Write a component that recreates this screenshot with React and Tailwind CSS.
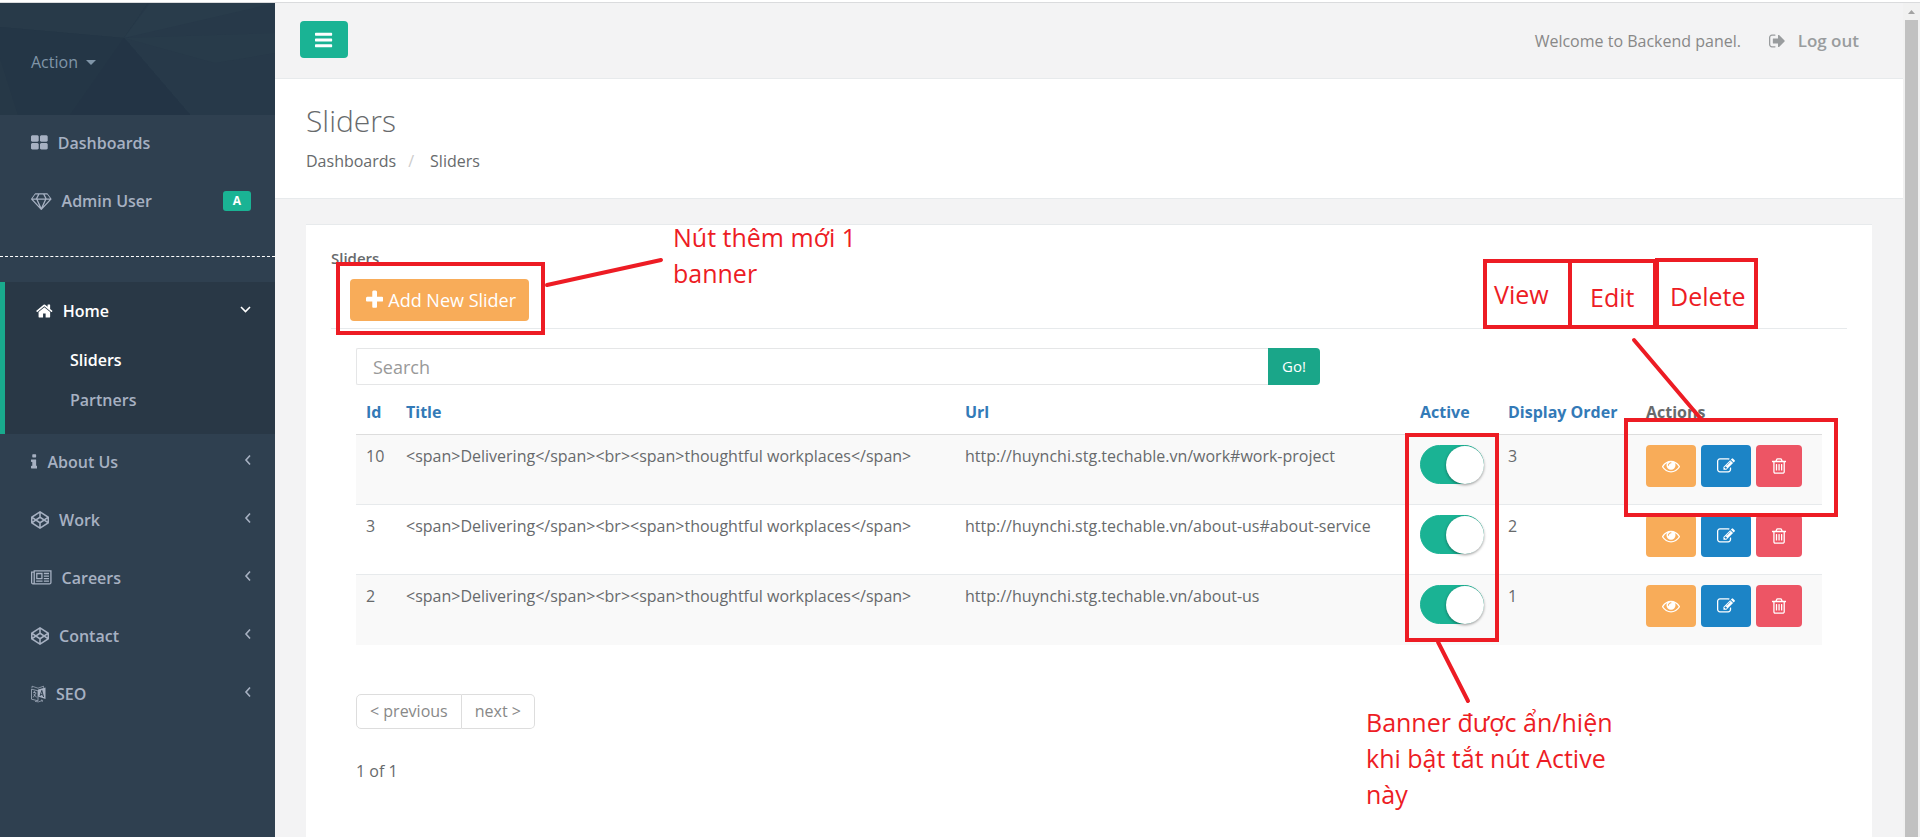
import { useState } from "react";

const DOUBLE_WIDE = "0 0 2048 1792";

const ICONS = {
  thLarge: {
    box: "64 0 1664 1792",
    d: "M832 1024v384q0 52-38 90t-90 38h-512q-52 0-90-38t-38-90v-384q0-52 38-90t90-38h512q52 0 90 38t38 90zm0-768v384q0 52-38 90t-90 38h-512q-52 0-90-38t-38-90v-384q0-52 38-90t90-38h512q52 0 90 38t38 90zm896 768v384q0 52-38 90t-90 38h-512q-52 0-90-38t-38-90v-384q0-52 38-90t90-38h512q52 0 90 38t38 90zm0-768v384q0 52-38 90t-90 38h-512q-52 0-90-38t-38-90v-384q0-52 38-90t90-38h512q52 0 90 38t38 90z",
  },
  diamond: {
    box: DOUBLE_WIDE,
    d: "M212 768l623 665-300-665h-323zm812 772l349-772h-698zm-538-900l204-384h-262l-288 384h346zm727 793l623-665h-323zm-583-793h788l-204-384h-380zm932 0h346l-288-384h-262zm89-486l384 512q14 18 13 41.5t-17 40.5l-960 1024q-18 20-47 20t-47-20l-960-1024q-16-17-17-40.5t13-41.5l384-512q18-26 51-26h1152q33 0 51 26z",
  },
  home: {
    box: "64 0 1664 1792",
    d: "M1472 992v480q0 26-19 45t-45 19h-384v-384h-256v384h-384q-26 0-45-19t-19-45v-480q0-1 .5-3t.5-3l575-474 575 474q1 2 1 6zm223-69l-62 74q-8 9-21 11h-3q-13 0-21-7l-692-577-692 577q-12 8-24 7-13-2-21-11l-62-74q-8-10-7-23.5t11-21.5l719-599q32-26 76-26t76 26l244 204v-195q0-14 9-23t23-9h192q14 0 23 9t9 23v408l219 182q10 8 11 21.5t-7 23.5z",
  },
  info: {
    box: "576 0 640 1792",
    d: "M1216 1344v128q0 26-19 45t-45 19h-512q-26 0-45-19t-19-45v-128q0-26 19-45t45-19h64v-384h-64q-26 0-45-19t-19-45v-128q0-26 19-45t45-19h384q26 0 45 19t19 45v576h64q26 0 45 19t19 45zm-128-1152v192q0 26-19 45t-45 19h-256q-26 0-45-19t-19-45v-192q0-26 19-45t45-19h256q26 0 45 19t19 45z",
  },
  codepen: {
    box: "0 0 1792 1792",
    d: "M216 1169l603 402v-359l-334-223zm-62-144l193-129-193-129v258zm819 546l603-402-269-180-334 223v359zm-77-493l272-182-272-182-272 182zm-411-275l334-223v-359l-603 402zm960 93l193 129v-258zm-138-93l269-180-603-402v359zm485-180v546q0 41-34 64l-819 546q-21 13-43 13t-43-13l-819-546q-34-23-34-64v-546q0-41 34-64l819-546q21-13 43-13t43 13l819 546q34 23 34 64z",
  },
  newspaper: {
    box: DOUBLE_WIDE,
    d: "M1024 512h-384v384h384v-384zm128 640v128h-640v-128h640zm0-768v640h-640v-640h640zm640 768v128h-512v-128h512zm0-256v128h-512v-128h512zm0-256v128h-512v-128h512zm0-256v128h-512v-128h512zm-1536 960v-960h-128v960q0 26 19 45t45 19 45-19 19-45zm1664 0v-1088h-1536v1088q0 33-11 64h1483q26 0 45-19t19-45zm128-1216v1216q0 80-56 136t-136 56h-1664q-80 0-136-56t-56-136v-1088h256v-128h1792z",
  },
  signOut: {
    box: "64 0 1664 1792",
    d: "M704 1440q0 4 1 20t.5 26.5-3 23.5-10 19.5-20.5 6.5h-320q-119 0-203.5-84.5t-84.5-203.5v-704q0-119 84.5-203.5t203.5-84.5h320q13 0 22.5 9.5t9.5 22.5q0 4 1 20t.5 26.5-3 23.5-10 19.5-20.5 6.5h-320q-66 0-113 47t-47 113v704q0 66 47 113t113 47h312l11.5 1 11.5 3 8 5.5 7 9 2 13.5zm928-544q0 26-19 45l-544 544q-19 19-45 19t-45-19-19-45v-288h-448q-26 0-45-19t-19-45v-384q0-26 19-45t45-19h448v-288q0-26 19-45t45-19 45 19l544 544q19 19 19 45z",
  },
  bars: {
    box: "128 0 1536 1792",
    d: "M1664 1344v128q0 26-19 45t-45 19h-1408q-26 0-45-19t-19-45v-128q0-26 19-45t45-19h1408q26 0 45 19t19 45zm0-512v128q0 26-19 45t-45 19h-1408q-26 0-45-19t-19-45v-128q0-26 19-45t45-19h1408q26 0 45 19t19 45zm0-512v128q0 26-19 45t-45 19h-1408q-26 0-45-19t-19-45v-128q0-26 19-45t45-19h1408q26 0 45 19t19 45z",
  },
  plus: {
    box: "192 0 1408 1792",
    d: "M1600 736v192q0 40-28 68t-68 28h-416v416q0 40-28 68t-68 28h-192q-40 0-68-28t-28-68v-416h-416q-40 0-68-28t-28-68v-192q0-40 28-68t68-28h416v-416q0-40 28-68t68-28h192q40 0 68 28t28 68v416h416q40 0 68 28t28 68z",
  },
  eye: {
    box: "0 0 1792 1792",
    d: "M1664 960q-152-236-381-353 61 104 61 225 0 185-131.5 316.5t-316.5 131.5-316.5-131.5-131.5-316.5q0-121 61-225-229 117-381 353 133 205 333.5 326.5t434.5 121.5 434.5-121.5 333.5-326.5zm-720-384q0-20-14-34t-34-14q-125 0-214.5 89.5t-89.5 214.5q0 20 14 34t34 14 34-14 14-34q0-86 61-147t147-61q20 0 34-14t14-34zm848 384q0 34-20 69-140 230-376.5 368.5t-499.5 138.5-499.5-139-376.5-368q-20-35-20-69t20-69q140-229 376.5-368t499.5-139 499.5 139 376.5 368q20 35 20 69z",
  },
  edit: {
    box: "0 0 1792 1792",
    d: "M888 1184l116-116-152-152-116 116v56h96v96h56zm440-720q-16-16-33 1l-350 350q-17 17-1 33t33-1l350-350q17-17 1-33zm80 594v190q0 119-84.5 203.5t-203.5 84.5h-832q-119 0-203.5-84.5t-84.5-203.5v-832q0-119 84.5-203.5t203.5-84.5h832q63 0 117 25 15 7 18 23 3 17-9 29l-49 49q-14 14-32 8-23-6-45-6h-832q-66 0-113 47t-47 113v832q0 66 47 113t113 47h832q66 0 113-47t47-113v-126q0-13 9-22l64-64q15-15 35-7t20 29zm-96-738l288 288-672 672h-288v-288zm444 132l-92 92-288-288 92-92q28-28 68-28t68 28l152 152q28 28 28 68t-28 68z",
  },
  trash: {
    box: "192 0 1408 1792",
    d: "M704 736v576q0 14-9 23t-23 9h-64q-14 0-23-9t-9-23v-576q0-14 9-23t23-9h64q14 0 23 9t9 23zm256 0v576q0 14-9 23t-23 9h-64q-14 0-23-9t-9-23v-576q0-14 9-23t23-9h64q14 0 23 9t9 23zm256 0v576q0 14-9 23t-23 9h-64q-14 0-23-9t-9-23v-576q0-14 9-23t23-9h64q14 0 23 9t9 23zm128 724v-948h-896v948q0 22 7 40.5t14.5 27 10.5 8.5h832q3 0 10.5-8.5t14.5-27 7-40.5zm-672-1076h448l-48-117q-7-9-17-11h-317q-10 2-17 11zm928 32v64q0 14-9 23t-23 9h-96v948q0 83-47 143.5t-113 60.5h-832q-66 0-113-58.5t-47-141.5v-952h-96q-14 0-23-9t-9-23v-64q0-14 9-23t23-9h309l70-167q15-37 54-63t79-26h320q40 0 79 26t54 63l70 167h309q14 0 23 9t9 23z",
  },
};

function Icon({ name }) {
  const { box, d } = ICONS[name];
  return (
    <svg viewBox={box} className="h-[18px] w-auto shrink-0 fill-current" aria-hidden="true">
      <path d={d} />
    </svg>
  );
}

function LanguageIcon() {
  return (
    <svg viewBox="0 0 15 18" className="h-[18px] w-auto shrink-0" aria-hidden="true">
      <path d="M7 4.5 14.5 2.6V14L7 11.6z" fill="currentColor" />
      <path d="M.5 4.2 7 5.8v10L.5 14.2z" fill="none" stroke="currentColor" strokeWidth=".8" />
      <path d="M1 3.2V1.2l6 2 5.5-2v1.6" fill="none" stroke="currentColor" strokeWidth=".7" />
      <path d="M2 7.2l3.4.8M3.6 6v1.8M4.8 8.2 2.2 12.4M2.6 8.8l3 3.6" fill="none" stroke="currentColor" strokeWidth=".8" />
      <path d="M9 11l1.8-5.6L12.6 12M9.6 9.4l2.4.6" fill="none" stroke="#2f4050" strokeWidth="1" />
      <path d="M4 16.4q3.500 1.400 7-.8M10 15l1.600.3-.4 1.600" fill="none" stroke="currentColor" strokeWidth=".7" />
    </svg>
  );
}

function Angle({ open }) {
  return (
    <svg viewBox="0 0 12 12" className="mb-1 ml-auto h-3 w-3 shrink-0" fill="none" stroke="currentColor" strokeWidth="1.600" aria-hidden="true">
      {open ? <path d="M2 4 6.500 8.500 11 4" /> : <path d="M11 1.500 7 6l4 4.500" />}
    </svg>
  );
}

const LOWER_MENU = [
  { label: "About Us", icon: <Icon name="info" /> },
  { label: "Work", icon: <Icon name="codepen" /> },
  { label: "Careers", icon: <Icon name="newspaper" /> },
  { label: "Contact", icon: <Icon name="codepen" /> },
  { label: "SEO", icon: <LanguageIcon /> },
];

const TITLE = "<span>Delivering</span><br><span>thoughtful workplaces</span>";

const ROWS = [
  { id: 10, url: "http://huynchi.stg.techable.vn/work#work-project", order: 3 },
  { id: 3, url: "http://huynchi.stg.techable.vn/about-us#about-service", order: 2 },
  { id: 2, url: "http://huynchi.stg.techable.vn/about-us", order: 1 },
];

function MenuLink({ icon, label, children }) {
  return (
    <a href="#" className="flex h-[58px] items-center gap-[10px] pr-6 pl-[31px]">
      {icon}
      <span>{label}</span>
      {children}
    </a>
  );
}

function Sidebar() {
  return (
    <aside className="w-[275px] shrink-0 bg-[#2f4050] font-semibold text-[#a7b1c2]">
      <div className="relative h-28 overflow-hidden bg-[#263847]">
        <svg viewBox="0 0 275 112" preserveAspectRatio="none" className="absolute inset-0 h-full w-full" aria-hidden="true">
          <path d="M0 0H148L124 35 0 24z" fill="#283a49" />
          <path d="M148 0H275V112H190L124 35z" fill="#273949" />
          <path d="M150 0H275L124 35z" fill="#293c4b" />
          <path d="M124 35 275 30V50L215 60z" fill="#283b4a" />
          <path d="M0 24 124 35 190 112H0z" fill="#243646" />
          <path d="M124 35 70 112H190z" fill="#233445" />
          <path d="M0 55 18 112H0z" fill="#263847" />
        </svg>
        <button type="button" className="relative mt-[47px] ml-[31px] flex items-center gap-2 font-normal text-[#8095a8]">
          Action
          <svg viewBox="0 0 10 5" className="h-[5px] w-[10px] fill-current" aria-hidden="true">
            <path d="M0 0h10L5 5z" />
          </svg>
        </button>
      </div>
      <nav>
        <div className="-mt-px pb-px">
          <MenuLink icon={<Icon name="thLarge" />} label="Dashboards" />
          <MenuLink icon={<Icon name="diamond" />} label="Admin User">
            <span className="ml-auto rounded-[3px] bg-[#1ab394] px-[10px] text-[12px] leading-5 font-bold text-white">A</span>
          </MenuLink>
        </div>
        <hr className="my-[25px] border-t border-dashed border-white" />
        <div className="border-l-[5px] border-[#19aa8d] bg-[#293846] pb-[14px] text-white">
          <MenuLink icon={<Icon name="home" />} label="Home">
            <Angle open />
          </MenuLink>
          <a href="#" className="flex h-10 items-center pl-[65px]">Sliders</a>
          <a href="#" className="flex h-10 items-center pl-[65px] text-[#a7b1c2]">Partners</a>
        </div>
        <div className="-mt-px">
          {LOWER_MENU.map((item) => (
            <MenuLink key={item.label} icon={item.icon} label={item.label}>
              <Angle />
            </MenuLink>
          ))}
        </div>
      </nav>
    </aside>
  );
}

function Switch({ label }) {
  const [on, setOn] = useState(true);
  return (
    <button
      type="button"
      role="switch"
      aria-checked={on}
      aria-label={label}
      onClick={() => setOn(!on)}
      className={
        on
          ? "flex h-[39px] w-16 justify-end rounded-full border border-[#1ab394] bg-[#1ab394]"
          : "flex h-[39px] w-16 justify-start rounded-full border border-[#dfdfdf] bg-white"
      }
    >
      <span className="-mr-px h-[38px] w-[38px] rounded-full bg-white shadow-[0_1px_3px_rgba(0,0,0,0.4)]" />
    </button>
  );
}

function ActionButton({ label, icon, color }) {
  return (
    <button type="button" aria-label={label} className={`flex h-[42px] items-center rounded-[4px] px-4 text-white ${color}`}>
      <Icon name={icon} />
    </button>
  );
}

function SliderTable() {
  return (
    <table className="mt-[6px] w-full table-fixed text-left leading-[22px]">
      <thead>
        <tr className="border-b border-[#dddddd] text-[#337ab7]">
          <th className="w-10 px-[10px] pt-[10px] pb-[11px]"><a href="#">Id</a></th>
          <th className="w-[559px] px-[10px] pt-[10px] pb-[11px]"><a href="#">Title</a></th>
          <th className="px-[10px] pt-[10px] pb-[11px]"><a href="#">Url</a></th>
          <th className="w-[88px] px-[10px] pt-[10px] pb-[11px]"><a href="#">Active</a></th>
          <th className="w-[138px] px-[10px] pt-[10px] pb-[11px] whitespace-nowrap"><a href="#">Display Order</a></th>
          <th className="w-[186px] px-[10px] pt-[10px] pb-[11px] text-[#676a6c]">Actions</th>
        </tr>
      </thead>
      <tbody>
        {ROWS.map((row) => (
          <tr key={row.id} className="h-[70px] border-b border-[#e7eaec] align-top last:border-0 odd:bg-[#f9f9f9]">
            <td className="p-[10px]">{row.id}</td>
            <td className="p-[10px]">{TITLE}</td>
            <td className="p-[10px]">{row.url}</td>
            <td className="p-[10px]"><Switch label={`Slider ${row.id} active`} /></td>
            <td className="p-[10px]">{row.order}</td>
            <td className="p-[10px]">
              <div className="flex gap-[5px]">
                <ActionButton label="View" icon="eye" color="bg-[#f8ac59]" />
                <ActionButton label="Edit" icon="edit" color="bg-[#1c84c6]" />
                <ActionButton label="Delete" icon="trash" color="bg-[#ed5565]" />
              </div>
            </td>
          </tr>
        ))}
      </tbody>
    </table>
  );
}

function Panel() {
  return (
    <section className="flex-1 border-t border-[#e7eaec] bg-white px-[25px] pt-[22px]">
      <div className="border-b border-[#e7eaec] pb-[7px]">
        <h5 className="text-[15px] leading-[22px] font-semibold">Sliders</h5>
        <button type="button" className="mt-[10px] ml-[19px] flex h-[42px] items-center gap-[5px] rounded-[4px] bg-[#f8ac59] pr-[13px] pl-4 text-[18px] text-white">
          <svg viewBox={ICONS.plus.box} className="h-[22px] w-auto fill-current" aria-hidden="true">
            <path d={ICONS.plus.d} />
          </svg>
          Add New Slider
        </button>
      </div>
      <div className="px-[25px] pt-[19px]">
        <form className="flex w-[964px]" onSubmit={(e) => e.preventDefault()}>
          <input
            type="text"
            aria-label="Search"
            placeholder="Search"
            className="h-[37px] min-w-0 flex-1 rounded-l-[2px] border border-r-0 border-[#e5e6e7] px-4 text-[18px] placeholder:text-[#999999]"
          />
          <button type="submit" className="h-[37px] w-[52px] rounded-r-[4px] bg-[#1aa689] text-[15px] font-medium text-white">Go!</button>
        </form>
        <SliderTable />
        <div className="mt-[49px] flex text-[#888888]">
          <button type="button" className="h-[35px] rounded-l-[5px] border border-[#dddddd] px-[13px]">&lt; previous</button>
          <button type="button" className="h-[35px] rounded-r-[5px] border border-l-0 border-[#dddddd] px-[13px]">next &gt;</button>
        </div>
        <p className="mt-[30px] leading-6">1 of 1</p>
      </div>
    </section>
  );
}

function Annotations() {
  return (
    <div className="pointer-events-none absolute inset-0 overflow-hidden text-[25px] leading-9 text-[#ed1c24]">
      <svg className="absolute top-0 left-0 h-[837px] w-[1920px]" fill="none" stroke="#ed1c24" strokeWidth="4" strokeLinecap="round" aria-hidden="true">
        <rect x="338" y="264" width="205" height="69" />
        <path d="M547 285 661 260" />
        <rect x="1485" y="261" width="85" height="66" />
        <rect x="1570" y="261" width="85" height="66" />
        <rect x="1657" y="260" width="99" height="67" />
        <path d="M1634 340 1701 419" />
        <rect x="1626" y="420" width="210" height="95" />
        <rect x="1407" y="435" width="90" height="205" />
        <path d="M1438 642 1468 701" />
      </svg>
      <p className="absolute top-[219px] left-[673px] whitespace-nowrap">Nút thêm mới 1<br />banner</p>
      <p className="absolute top-[276px] left-[1494px]">View</p>
      <p className="absolute top-[279px] left-[1590px]">Edit</p>
      <p className="absolute top-[278px] left-[1670px]">Delete</p>
      <p className="absolute top-[704px] left-[1366px] whitespace-nowrap">
        Banner được ẩn/hiện<br />khi bật tắt nút Active<br />này
      </p>
    </div>
  );
}

export default function App() {
  return (
    <div className="relative flex h-screen flex-col overflow-hidden bg-white pt-[2px] font-['Open_Sans','Noto_Sans',sans-serif] text-[16px] text-[#676a6c]">
      <div className="flex min-h-0 flex-1 border-t border-[#dadbdd]">
        <Sidebar />
        <main className="flex min-w-0 flex-1 flex-col bg-[#f3f3f4]">
          <header className="flex h-[76px] shrink-0 items-start border-b border-[#e7eaec] pr-[44px] pl-[25px]">
            <button type="button" aria-label="Toggle menu" className="mt-[18px] flex h-[37px] w-12 items-center justify-center rounded-[4px] bg-[#1ab394] text-white">
              <svg viewBox={ICONS.bars.box} className="h-5 w-auto fill-current" aria-hidden="true">
                <path d={ICONS.bars.d} />
              </svg>
            </button>
            <div className="ml-auto flex h-[76px] items-center gap-7 text-[#888888]">
              <span>Welcome to Backend panel.</span>
              <a href="#" className="flex items-center gap-3 text-[17px] font-semibold text-[#999c9e]">
                <Icon name="signOut" />
                Log out
              </a>
            </div>
          </header>
          <div className="h-[120px] shrink-0 border-b border-[#e7eaec] bg-white px-[31px] pt-6">
            <h2 className="text-[30px] leading-9 font-light">Sliders</h2>
            <nav aria-label="Breadcrumb" className="mt-[10px] flex leading-6">
              <a href="#">Dashboards</a>
              <span className="px-3 text-[#cccccc]">/</span>
              <span className="pl-1">Sliders</span>
            </nav>
          </div>
          <div className="flex flex-1 flex-col px-[31px] pt-[25px]">
            <Panel />
          </div>
        </main>
        <div className="flex w-[17px] shrink-0 flex-col items-center bg-[#f1f1f1]" aria-hidden="true">
          <svg viewBox="0 0 17 17" className="h-[17px] w-[17px] fill-[#a3a3a3]">
            <path d="M5 11h7L8.500 7z" />
          </svg>
          <div className="w-[13px] flex-1 bg-[#c1c1c1]" />
        </div>
      </div>
      <Annotations />
    </div>
  );
}
